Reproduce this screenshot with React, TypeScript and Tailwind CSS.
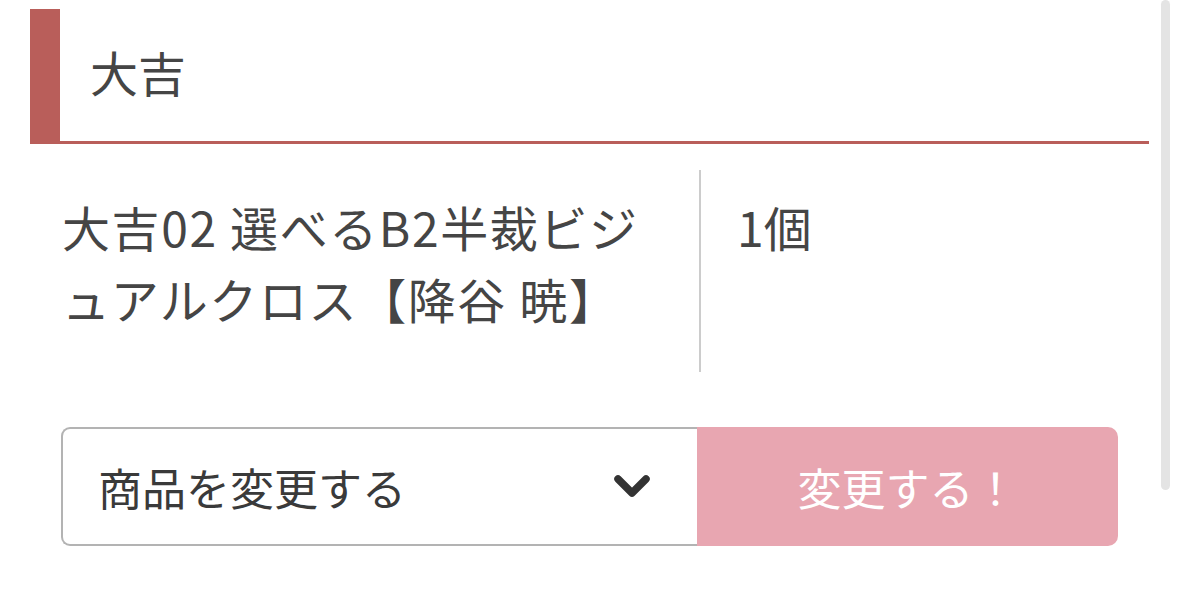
import React from "react";

const font = { fontFamily: '"Noto Sans CJK JP", "Noto Sans", sans-serif' };

function Chevron() {
  return (
    <svg width="38" height="26" viewBox="0 0 38 26" className="shrink-0">
      <polyline
        points="5,5 19,19 33,5"
        fill="none"
        stroke="#333333"
        strokeWidth="7.5"
        strokeLinecap="round"
        strokeLinejoin="round"
      />
    </svg>
  );
}

export default function App() {
  return (
    <div className="relative w-[1179px] h-[590px] overflow-hidden bg-white text-[#454545]" style={font}>
      {/* scrollbar */}
      <div className="absolute left-[1161px] top-0 w-[9px] h-[490px] rounded-full bg-[#e4e4e4]" />

      <div className="pl-[30px] pt-[9px] w-[1149px]">
        {/* HEADER */}
        <div className="h-[135px] border-l-[30px] border-b-[3px] border-[#b95e5a] flex items-center pl-[30px] pb-[8px]">
          <h2 className="text-[48px] leading-none font-normal">大吉</h2>
        </div>

        {/* ITEM ROW */}
        <div className="mt-[26px] flex">
          <div className="w-[669px] pl-[32px] pr-[28px] pt-[20px] pb-[38px] text-[48px] leading-[72px] tracking-[1.6px]">
            大吉02 選べるB2半裁ビジュアルクロス【降谷 暁】
          </div>
          <div className="flex-1 border-l-2 border-[#cccccc] pl-[36px] pt-[20px] text-[48px] leading-[72px]">
            1個
          </div>
        </div>

        {/* CHANGE ROW */}
        <div className="mt-[55px] ml-[31px] flex h-[119px] w-[1057px]">
          <div className="w-[636px] flex items-center justify-between border-2 border-r-0 border-[#b3b3b3] rounded-l-[9px] pl-[35px] pr-[46px]">
            <span className="text-[44px] leading-none text-[#3a3a3a]">商品を変更する</span>
            <Chevron />
          </div>
          <button className="flex-1 flex items-center justify-center bg-[#e8a6b1] rounded-r-[10px] text-white text-[44px] leading-none">
            変更する！
          </button>
        </div>
      </div>
    </div>
  );
}
